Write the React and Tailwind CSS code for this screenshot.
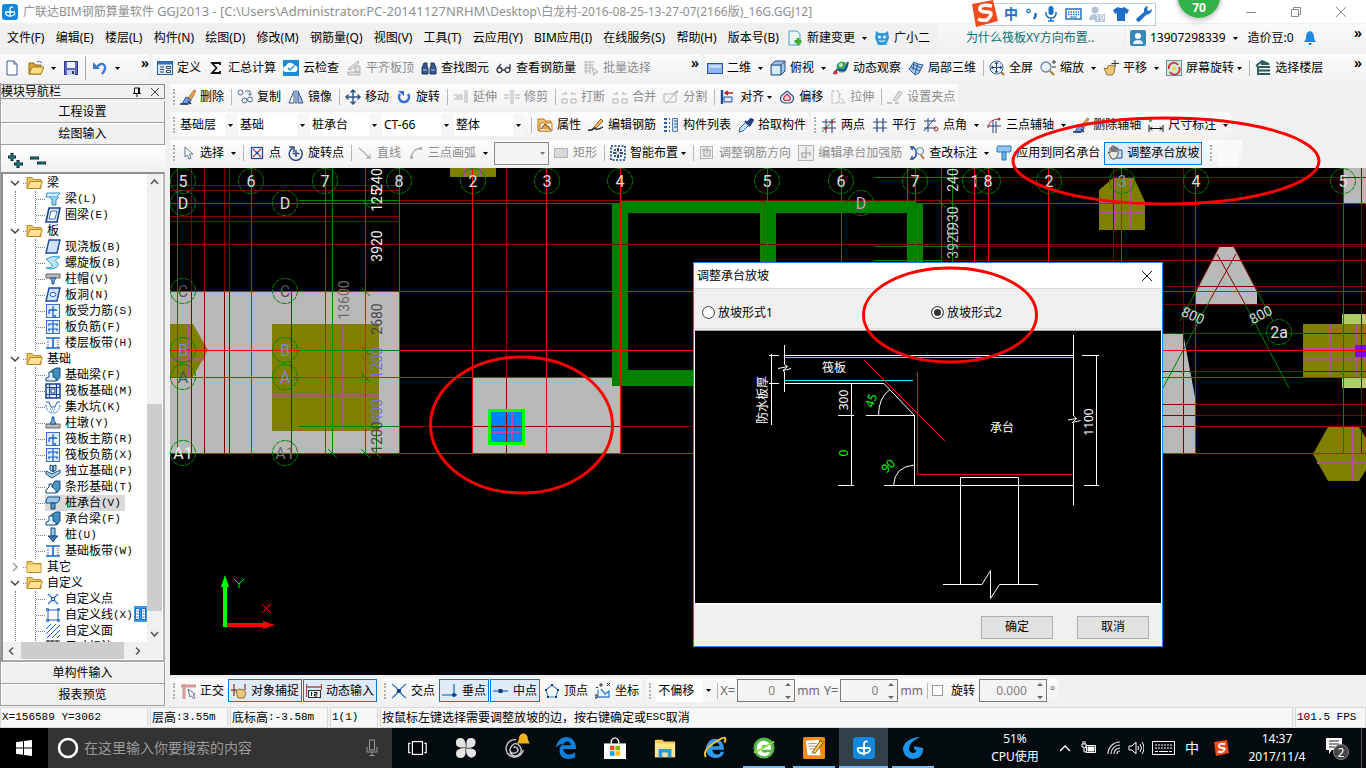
import React from "react";

const N = "#1a3c6e";
const G = "#b4b4b4";

const ICONS = {
  newfile: <><path d="M3 1h7l3 3v11H3z" fill="#fff" stroke="#3f5f8f" /><path d="M10 1v3h3" fill="#cfe0f5" stroke="#3f5f8f" /></>,
  open: <><path d="M1 3h5l1 2h6v9H1z" fill="#d9a93a" stroke="#8f6a1a" /><path d="M1 14l3-7h12l-3 7z" fill="#ffdf85" stroke="#a47a22" /><path d="M9 2q3-2 5 1" fill="none" stroke="#3c6fae" /></>,
  save: <><rect x="1.500" y="1.500" width="13" height="13" fill="#5b6cc0" stroke="#2d3a80" /><rect x="4" y="2" width="8" height="6" fill="#eef1fb" /><rect x="4" y="10" width="8" height="5" fill="#c9cfe8" /><rect x="9" y="11" width="2" height="3" fill="#2d3a80" /></>,
  undo: <><path d="M5 7q4-5 7-2t-2 9" fill="none" stroke="#3f78d0" strokeWidth="2.400" /><path d="M1 2v7h7z" fill="#3f78d0" /></>,
  define: <><rect x="0.500" y="1.500" width="15" height="13" fill="#dce9fb" stroke="#2b5fa8" /><path d="M1 3h14" stroke="#2b6fc8" strokeWidth="3" /><path d="M3 7h4M3 9.500h4M3 12h4" stroke="#34495e" /><path d="M9.500 6.500h4v2h-4zM9.500 10.500h4v2h-4z" fill="#fff" stroke="#34495e" /></>,
  sigma: <path d="M12 5V3H4l4.500 5L4 13h8v-2" fill="none" stroke="#111" strokeWidth="1.800" />,
  cloud: <><rect width="16" height="16" fill="#1c8ad6" /><path d="M3 12a3 3 0 0 1 0-6 4.500 4.500 0 0 1 8.500-.5A3.300 3.300 0 0 1 12 12z" fill="#fff" /><path d="M5 8l2 2 4-4" fill="none" stroke="#1c8ad6" strokeWidth="1.400" /></>,
  slabtop: <path d="M2 9L12 1l1 2-8 7zM2 12h12v3H2zM9 6h5v6H9z" fill="#ddd" stroke={G} />,
  binoc: <><path d="M3 3h3v3l1 2v6H1V8zM10 3h3l2 5v6H9V8l1-2z" fill="#35578c" stroke="#1d355c" /><path d="M7 8h2M2 10h4M10 10h4" stroke="#b8d0f0" /></>,
  glasses: <path d="M1 10a2.500 2.500 0 1 0 5 0 2.500 2.500 0 1 0-5 0M9 10a2.500 2.500 0 1 0 5 0 2.500 2.500 0 1 0-5 0M6 10h3M2 8l3-4M14 9V4" fill="none" stroke="#2b3a4a" strokeWidth="1.300" />,
  batch: <><path d="M1 2h10M1 5h10M1 8h8M1 11h7M3 1v13M7 1v13" stroke={G} /><path d="M9 7l6 5-3 .5-1 3z" fill="#eee" stroke={G} /></>,
  rect2d: <><rect x="0.500" y="3.500" width="15" height="10" fill="#8fb4f8" stroke="#2a4fae" /><path d="M2 5h12v3H2z" fill="#c4dafc" /></>,
  cube: <><path d="M1 5l4-4h10v10l-4 4H1z" fill="#9cc4e8" stroke="#284f7c" /><path d="M1 5h10v10M11 5l4-4" fill="none" stroke="#284f7c" /><path d="M2 6h8v8H2z" fill="#d9ebfa" /></>,
  orbit: <><circle cx="9" cy="7" r="5.500" fill="#3aa35a" /><circle cx="8" cy="5" r="2" fill="#bdf0c8" /><path d="M1 14q2-6 7-4t7-8" fill="none" stroke="#1c4fa0" strokeWidth="2" /><circle cx="2.500" cy="12.500" r="2" fill="#d03030" /></>,
  local3d: <><path d="M1 9l5-7 4 2 5 1-4 8-4 2z" fill="#a9c9ee" stroke="#2c5c94" /><path d="M6 2l-1 8M10 4L7 14M3 7l9 4M5 4l8 4" stroke="#2c5c94" fill="none" /></>,
  fit: <><circle cx="7.500" cy="7.500" r="6.500" fill="#e8f1fc" stroke="#44618c" /><path d="M7.500 2.500v10M2.500 7.500h10M6 4l1.500-2L9 4M6 11l1.500 2L9 11M4 6L2 7.500 4 9M11 6l2 1.500L11 9" fill="none" stroke="#234a86" /><path d="M12 12l3 3" stroke="#a06a2a" strokeWidth="2" /></>,
  zoom: <><circle cx="6" cy="7" r="5" fill="#eaf3fd" stroke="#6a87ac" strokeWidth="1.300" /><path d="M10 11l4 4" stroke="#b07830" strokeWidth="2.200" /><path d="M12 2h4M14 0v4M12 7h4" stroke="#333" /></>,
  pan: <><path d="M1 8l3 1 1-3 5-1 2 3-1 5-2 2H4z" fill="#ecc878" stroke="#94703a" /><path d="M12 0v7M8.500 3.500H16" stroke="#333" /></>,
  screenrot: <><rect x="0.500" y="0.500" width="15" height="15" fill="#cfe8d8" stroke="#6a92b0" /><path d="M3 9a5 5 0 0 1 9-4M13 7a5 5 0 0 1-9 5" fill="none" stroke="#d03030" strokeWidth="1.800" /><rect x="6" y="7" width="4" height="3" fill="#f2d250" /></>,
  floors: <path d="M1 6l6-5 7 3H6M4 7h11M3 10.500h12M3 14h12M3 6v9" fill="none" stroke="#2a5a5a" strokeWidth="1.800" />,
  brush: <><path d="M8 9L14 1l2 1-5 9z" fill="#e9a54c" stroke="#7a4a20" strokeWidth=".6" /><path d="M6 8l5 3-2 4H2z" fill="#7a9ed8" stroke="#2a4f94" /><path d="M0 15h8M8 12l3 3" stroke="#22396a" strokeWidth="1.500" /></>,
  copy: <><circle cx="3.500" cy="3.500" r="2.500" fill="none" stroke="#4a6a94" /><circle cx="7.500" cy="11.500" r="2.500" fill="none" stroke="#4a6a94" /><circle cx="13" cy="10.500" r="2.500" fill="none" stroke="#4a6a94" /><path d="M8 2h5v4M11 4.500l2 2 2-2" fill="none" stroke="#4a6a94" /></>,
  mirror: <><path d="M6 2v12H1z" fill="#fff" stroke="#2a5090" /><path d="M10 2v12h5z" fill="#a9c4ea" stroke="#2a5090" /><path d="M8 1v14" stroke="#2a5090" /></>,
  move: <path d="M8 1v14M1 8h14M5.500 3.500L8 1l2.500 2.500M5.500 12.500L8 15l2.500-2.500M3.500 5.500L1 8l2.500 2.500M12.500 5.500L15 8l-2.500 2.500" fill="none" stroke="#2f5384" strokeWidth="1.400" />,
  rotate: <><path d="M4 5a5 5 0 1 0 8 0" fill="none" stroke="#3a6fd0" strokeWidth="2.600" /><path d="M2 2h6v5z" fill="#3a6fd0" /></>,
  extend: <path d="M1 6h8v4H1M12 1v13M14 1v13M3 8h5" fill="none" stroke={G} />,
  trim: <path d="M0 6h5M0 9h5M7 1v14M9 1v14M11 6h5M11 9h5" fill="none" stroke={G} />,
  brk: <path d="M1 5h5M4 3l2 2M10 5h5M12 3l-2 2M1 10h5v4H1zM10 10h5v4h-5z" fill="none" stroke={G} />,
  split: <><path d="M1 5h12v8H1zM3 15L14 2" fill="none" stroke={G} /><path d="M10 4l5-3v3z" fill={G} /></>,
  align: <><path d="M2 1v14" stroke="#1d4c9c" strokeWidth="2.400" /><path d="M4 8h8v5H4z" fill="#dce9fb" stroke="#1d4c9c" /><path d="M5 4h8M8 2L5 4l3 2" fill="none" stroke="#b02020" strokeWidth="1.400" /></>,
  offset: <><path d="M8 2l6 5q2 6-4 7H6q-6-1-4-7z" fill="#e8eef8" stroke="#2a4f94" strokeWidth="1.200" /><path d="M8 5l3 3q1 3-1 3.500H6Q4 11 5 8z" fill="#f6c8c8" stroke="#c03838" strokeWidth="1.200" /></>,
  stretch: <path d="M2 2h7v12H2zM9 7l3-3M11 9l4 5H9" fill="none" stroke={G} strokeDasharray="3 1" />,
  grip: <><path d="M0 14h5M8 14h4" stroke={G} strokeWidth="1.500" /><path d="M6 11L12 2l3 2-6 8z" fill="#ddd" stroke={G} /></>,
  props: <><path d="M1 2h6l1 2h6v10H1z" fill="#f7c268" stroke="#b97a1c" /><path d="M3 6h12v8H3z" fill="#fff" stroke="#b97a1c" /><path d="M4 12l4-5 3 2 3 4" fill="#e0a040" stroke="#6a3a10" /></>,
  editbar: <><path d="M0 13q4 1 6-2 3 3 9-1" fill="none" stroke="#222" strokeWidth="1.500" /><path d="M6 10l7-8 2 2-7 7z" fill="#f0c060" stroke="#8a5a20" /></>,
  list: <><path d="M1 2h3M1 6h3M1 10h3M1 14h3M6 2h1M6 6h1M6 10h1M6 14h1" stroke="#2a5fae" strokeWidth="2" /><path d="M9.500 1.500h5v13h-5z" fill="#dbe8fa" stroke="#5a7aac" /><path d="M11 4h3M11 7h3M11 10h3" stroke="#2a4f94" /></>,
  pick: <><path d="M1 15l1-4 6-6 3 3-6 6z" fill="#cfe4fa" stroke="#2a5aa0" /><path d="M7 4l5 5M9 6l4-4 2 1-3 5" fill="#1f4f9f" stroke="#1f3f7f" strokeWidth="2" /></>,
  twopt: <><path d="M1 5h14M1 11h14M5 2v14M11 2v14" stroke="#2a3f84" fill="none" /><path d="M1 15L14 1" stroke="#2a8a3a" /><circle cx="5" cy="11" r="1.500" fill="#c02828" /><circle cx="11" cy="5" r="1.500" fill="#c02828" /></>,
  paral: <path d="M1 5h14M1 11h14M5 1v14M11 1v14" stroke="#2a3f84" strokeWidth="1.200" fill="none" />,
  ptang: <><path d="M1 4h12M1 11h12M5 1v14M1 14L12 1" stroke="#2a3f84" fill="none" /><circle cx="13" cy="12" r="2" fill="none" stroke="#c02828" /></>,
  threepx: <><path d="M1 9h14M7 3v13M10 4v12" stroke="#2a3f84" fill="none" /><path d="M2 11q1-9 11-9" fill="none" stroke="#c02828" /><circle cx="13" cy="2" r="1.500" fill="#c02828" /></>,
  dimen: <><path d="M1 8v7M15 8v7M2 11.500h12M4 9.500l-2 2 2 2M12 9.500l2 2-2 2" stroke="#111" fill="none" /><circle cx="2.500" cy="3.500" r="1.500" fill="#2faa3a" /></>,
  cursor: <path d="M5 2v10l2.500-2L9 14l2-1-1.500-4H13z" fill="#fff" stroke="#60758e" />,
  point: <><rect x="2.500" y="2.500" width="11" height="11" fill="#fff" stroke="#1d4c9c" strokeWidth="1.300" /><path d="M4 4l8 8M12 4l-8 8" stroke="#c02828" strokeWidth="1.200" /><circle cx="8" cy="8" r="1.400" fill="#1d4c9c" /></>,
  rotpt: <><path d="M5 3a6.500 6.500 0 1 0 7 1" fill="none" stroke="#2f4f80" strokeWidth="1.500" /><path d="M1 2h5v5M8 5v7M4.500 8.500h7" fill="none" stroke="#2f4f80" strokeWidth="1.500" /></>,
  line: <path d="M2 3l11 10M9 13h4V9" fill="none" stroke={G} strokeWidth="1.300" />,
  arc: <><path d="M3 13Q4 4 13 3" fill="none" stroke={G} strokeWidth="1.300" /><path d="M2 11h3v3H2zM11 2h3v3h-3z" fill={G} /></>,
  rect: <rect x="1.500" y="3.500" width="13" height="9" fill="#d8d8d8" stroke={G} />,
  smart: <><rect x="1" y="1" width="14" height="14" fill="#eaf2fc" stroke={N} strokeWidth="1.600" strokeDasharray="2 1.500" /><path d="M8 3v3.500M8 9.500V13M3 8h3.500M9.500 8H13" stroke="#111" strokeWidth="1.600" /><path d="M4 4h2v2H4zM10 4h2v2h-2zM4 10h2v2H4zM10 10h2v2h-2z" fill="#2f5fae" /></>,
  dirbar: <><rect x="1.500" y="1.500" width="12" height="12" fill="#eee" stroke={G} /><path d="M5 3v8h6V5H3M8 2v7" fill="none" stroke={G} strokeWidth="1.500" /></>,
  strength: <><rect x="0.500" y="0.500" width="15" height="15" fill="#eee" stroke={G} /><path d="M8 2v12M3 8h10M4 8v4h4M12 8v3" fill="none" stroke={G} strokeWidth="1.500" /></>,
  checkdim: <><path d="M1 2h3l3 3v6l-3 3H1M3 2v3M3 11v3" fill="none" stroke="#1d4c9c" strokeWidth="1.500" /><circle cx="11" cy="6" r="3.500" fill="#e5f1fd" stroke="#6a7f98" /><path d="M12 10l3 4" stroke="#b07830" strokeWidth="2" /></>,
  cap: <><path d="M2 1h13v5l-1 1H1V3z" fill="#8fc8f0" stroke="#2a78b8" /><path d="M6 7h4v8H6z" fill="#6ab0e4" stroke="#2a78b8" /></>,
  hand: <><path d="M8 5h7v8H8z" fill="#cfe0f5" stroke="#1d4c9c" /><path d="M1 7l2 1V3h2v4-6h2v6-5h2v5-4h2v7l-3 4H5z" fill="#e8e8e8" stroke="#555" /></>,
  ortho: <><path d="M1 3h15M4 1v15" stroke="#d49a9a" strokeWidth="3" fill="none" /><path d="M8 6l7 5-2 .8 2 3-1.500 1-2-3L10 14z" fill="#fff" stroke="#60758e" /></>,
  snap: <><path d="M0 7h6M3 1v12M14 1v6" stroke="#8a4a4a" strokeWidth="1.400" fill="none" /><path d="M5 8l3-2 5 1 2 3-2 5H7z" fill="#ecc878" stroke="#94703a" /></>,
  dyninput: <><path d="M0.500 1v13M15.500 1v6M0 4h15" stroke="#a05050" strokeWidth="1.300" /><rect x="2.500" y="7.500" width="12" height="7" fill="#eee" stroke="#333" /><path d="M5.500 9v4M8 9.500h3v1.700H8.500V13H11" stroke="#111" fill="none" /></>,
  cross: <><path d="M1 1q4 3 7 7t7 7M15 1q-4 3-7 7t-7 7" fill="none" stroke="#3a7fc8" strokeWidth="1.500" /><circle cx="8" cy="8" r="2" fill="#123a80" /></>,
  perp: <><path d="M0 12h15M12 1v11" stroke="#4a88cc" strokeWidth="1.600" /><circle cx="12" cy="12" r="2" fill="#123a80" /></>,
  mid: <><path d="M0 8h15" stroke="#4a88cc" strokeWidth="1.600" /><rect x="5.500" y="6" width="4" height="4" fill="#123a80" /></>,
  vertex: <><path d="M8 2l6 5-2 7H4L2 7z" fill="none" stroke="#4a88cc" strokeWidth="1.200" /><path d="M7 1h2v2H7zM13 6h2v2h-2zM11 13h2v2h-2zM3 13h2v2H3zM1 6h2v2H1z" fill="#123a80" /></>,
  coord: <><path d="M3 7v7h11V8l-4 3-4-5" fill="none" stroke="#3a7fc8" strokeWidth="1.300" /><path d="M1 4l1 1 1-1M5 1h2v2H5zM12 0l3 3M15 0l-3 3M0 12h2v3H0z" stroke="#234" fill="none" /></>,
  newchange: <><path d="M2 1h8l3 3v11H2z" fill="#eaf6fd" stroke="#4aa0c8" /><path d="M11 8v7M7.500 11.500h7" stroke="#3fae2a" strokeWidth="3" /></>,
  guang: <><path d="M2 1l3 2h6l3-2 1 7-3 7H4L1 8z" fill="#2a9be0" /><circle cx="5.500" cy="7" r="1.500" fill="#fff" /><circle cx="10.500" cy="7" r="1.500" fill="#fff" /><path d="M5 10.500q3 2 6 0" stroke="#fff" fill="none" /></>,
  user: <><rect width="16" height="16" rx="2" fill="#3b86b8" /><circle cx="8" cy="6" r="3" fill="#fff" /><path d="M3 14q0-4 5-4t5 4z" fill="#e4f0f8" /></>,
  bell: <><path d="M8 1q4 1 4 6 0 3 2 5H2q2-2 2-5 0-5 4-6z" fill="#1e88e5" /><path d="M6 13h4l-2 2.500z" fill="#1667b8" /></>,
  // component tree
  beam: <><path d="M2 2h13l-3 4H1z" fill="#d6effb" stroke="#2a8fc0" /><path d="M5 6l2 3v5h4V9l3-3" fill="#8fd0ee" stroke="#2a8fc0" /></>,
  ring: <><path d="M4 1h11l-3 14H1z" fill="#e6f0fc" stroke="#1c3f8c" strokeWidth="1.600" /><path d="M6 4h6l-2 8H4z" fill="#fff" stroke="#3a6fc0" /></>,
  slab: <path d="M4 1h11l-3 13H1z" fill="#cfe2fb" stroke="#1c4a9c" strokeWidth="1.400" />,
  spiral: <path d="M1 4q6-4 14-2-7 3-3 5 3 4-2 6t-9 0q7 0 6-3-3-4-6-6z" fill="#bfe6f8" stroke="#2a9ac8" />,
  colcap: <><path d="M1 3h14v4H1z" fill="#bbb" stroke="#666" /><path d="M5 7h6l-2 3v3H7v-3z" fill="#7fb0f0" stroke="#1c4a9c" /></>,
  hole: <><path d="M4 1h11l-3 13H1z" fill="#cfe2fb" stroke="#1c4a9c" strokeWidth="1.400" /><ellipse cx="8" cy="7.500" rx="3" ry="2" fill="#fff" stroke="#1c5fd0" /></>,
  bar1: <><rect x="1.500" y="1.500" width="13" height="13" fill="#e3eefd" stroke="#3a6fc0" /><path d="M8 3v10h3M4 7h8M4 7v4" fill="none" stroke="#1c5fd0" strokeWidth="1.300" /></>,
  bar2: <><rect x="1.500" y="1.500" width="13" height="13" fill="#e3eefd" stroke="#3a6fc0" /><path d="M8 2v12M3 5h10M3 10h10M4 5v2M12 5v2M4 10v2M12 10v2" fill="none" stroke="#1c5fd0" strokeWidth="1.200" /></>,
  strip: <><path d="M1 3h14M1 13h14M8 3v10" fill="none" stroke="#1c5fd0" strokeWidth="1.600" /><path d="M3 5v7M13 5v7" stroke="#345" strokeDasharray="1 1" /></>,
  fbeam: <><path d="M6 10V4l5-3h4v9l-3 4z" fill="#3f8fc0" stroke="#164a7c" /><path d="M1 14v-3l3-1V5h4v5l3 1v3z" fill="#e4f3fb" stroke="#164a7c" /></>,
  raft: <><rect x="1" y="1" width="14" height="14" fill="#e3eefd" stroke="#163f8c" strokeWidth="1.500" /><path d="M4.500 1v14M11.500 1v14M1 4.500h14M1 11.500h14" stroke="#163f8c" /><rect x="6" y="6" width="4" height="4" fill="#fff" stroke="#163f8c" /></>,
  sump: <><path d="M1 3h3l2 5h4l2-5h3" fill="none" stroke="#1c5fd0" /><path d="M1 6q1 8 7 8t7-8" fill="none" stroke="#1c5fd0" strokeDasharray="2 1" /><path d="M5 10h6M6 12h4" stroke="#1c5fd0" strokeDasharray="1 1" /></>,
  pier: <><path d="M1 9h14v4H1z" fill="#bbb" stroke="#666" /><path d="M7 2h2v3l2 4H5l2-4z" fill="#7fb0f0" stroke="#1c4a9c" /></>,
  isolated: <path d="M1 8l6 3 8-4v3l-8 5-6-4zM5 2l3 1v6L5 7zM8 3l3-1v5L8 9z" fill="#a9d2ea" stroke="#164a7c" />,
  stripf: <><path d="M6 8l4-6h5v8l-3 4z" fill="#4a98c4" stroke="#164a7c" /><path d="M1 14v-3l3-3V5h3v3l4 3v3z" fill="#fff" stroke="#164a7c" /></>,
  pilecap: <><path d="M1 5l2-3h12l-1 4-2 2H1z" fill="#9cc8e8" stroke="#164a7c" /><path d="M6 8h4v6H6z" fill="#4a98c4" stroke="#164a7c" /></>,
  pile: <><path d="M6 1h4v8H6z" fill="#9cc8e8" stroke="#164a7c" /><path d="M3 9h10l-3 3-2 3-2-3z" fill="#3f7fb0" stroke="#164a7c" /></>,
  cpoint: <><path d="M3 3l10 10M13 3L3 13" stroke="#2a70c0" strokeWidth="1.200" /><circle cx="8" cy="8" r="1.600" fill="#fff" stroke="#123a80" /></>,
  cline: <><rect x="3" y="3" width="10" height="10" fill="#fff" stroke="#1c5fd0" /><path d="M1.500 1.500h2v2h-2zM12.500 1.500h2v2h-2zM1.500 12.500h2v2h-2zM12.500 12.500h2v2h-2z" fill="#7fb0f0" stroke="#1c4a9c" strokeWidth=".7" /></>,
  cface: <path d="M1 6l5-5M1 11L11 1M2 15L15 2M7 15l8-8M12 15l3-3" stroke="#1c5fd0" />,
  cmore: <path d="M1 2h14M3 1v4M7 1v4M12 1v4" stroke="#222" />,
};

function Icon({ name }) {
  return <svg viewBox="0 0 16 16" className="h-4 w-4 shrink-0" fill="none" aria-hidden="true">{ICONS[name]}</svg>;
}

function Caret() {
  return <svg viewBox="0 0 5 3" className="h-[3px] w-[5px] shrink-0" aria-hidden="true"><path d="M0 0h5L2.500 3z" fill="#000" /></svg>;
}

function Sep() {
  return <span className="-mr-0.5 h-4 w-px shrink-0 bg-[#b8b8b8]" />;
}

function Grip() {
  return <span className="-mr-0.5 h-4 shrink-0 border-l-2 border-dotted border-[#b0b0b0]" />;
}

function More() {
  return <button aria-label="更多" className="self-start pt-0.5 text-sm font-semibold leading-none text-black">»</button>;
}

function Tool({ icon, label, off, caret, tight, active }) {
  return (
    <button
      disabled={off}
      className={
        "flex h-[23px] shrink-0 items-center whitespace-nowrap " +
        (active ? "-mx-[3px] border border-[#0078d7] bg-[#dfebf7] px-0.5 " : "") +
        (off ? "text-[#8c8c8c]" : "text-black")
      }
    >
      <Icon name={icon} />
      <span className="ml-1">{label}</span>
      {caret && <span className="ml-[7px] flex"><Caret /></span>}
      {tight && <span className="ml-[3px] flex"><Caret /></span>}
    </button>
  );
}

function Combo({ label, value, short }) {
  return (
    <div className={"relative h-[22px] shrink-0 " + (short ? "w-[58px]" : "w-[70px]")}>
      <select aria-label={label} className="h-full w-full appearance-none bg-white pl-0.5 pr-3 text-xs outline-none">
        <option>{value}</option>
      </select>
      <span className="pointer-events-none absolute inset-y-0 right-0 flex w-[11px] items-center justify-center bg-[#f6f6f6]"><Caret /></span>
    </div>
  );
}

function Group({ children, className = "" }) {
  return <div className={"flex h-[26px] items-center gap-[7px] rounded-sm bg-linear-to-b from-[#fcfcfc] to-[#f1f1f1] px-[3px] " + className}>{children}</div>;
}

function Sim({ text }) {
  return text.split(/([\x20-\x7e]+)/).filter(Boolean).map((part, i) =>
    /^[\x20-\x7e]+$/.test(part)
      ? <span key={i} className="whitespace-pre font-['Liberation_Mono',monospace] text-[11px]">{part}</span>
      : <span key={i}>{part}</span>
  );
}

function TitleBar() {
  return (
    <header className="flex h-[23px] shrink-0 items-center bg-white pl-0.5 pr-5">
      <svg viewBox="0 0 16 16" className="h-4 w-4" aria-hidden="true">
        <rect width="16" height="16" rx="3" fill="#1287e0" />
        <path d="M8 13V5a2 2 0 0 1 3-1.500M3 8h10M3.500 8q0 4 4.500 4t5-3" fill="none" stroke="#fff" strokeWidth="1.300" />
      </svg>
      <h1 className="ml-[5px] whitespace-nowrap text-[#8f8f8f]">
        广联达BIM钢筋算量软件 <span className="text-[13px]">GGJ2013 - [C:\Users\Administrator.PC-20141127NRHM\</span>Desktop\白龙村-2016-08-25-13-27-07(2166版)_16G.GGJ12]
      </h1>
      <div className="ml-auto flex items-center gap-[35px] text-[#8a8a8a]">
        <button aria-label="最小化"><svg viewBox="0 0 10 10" className="h-2.5 w-2.5"><path d="M0 5.500h10" stroke="currentColor" /></svg></button>
        <button aria-label="还原"><svg viewBox="0 0 10 10" className="h-2.5 w-2.5"><path d="M.5 2.500h7v7h-7zM2.500 2.500v-2h7v7h-2" fill="none" stroke="currentColor" /></svg></button>
        <button aria-label="关闭"><svg viewBox="0 0 10 10" className="h-2.5 w-2.5"><path d="M0 0l10 10M10 0L0 10" stroke="currentColor" /></svg></button>
      </div>
    </header>
  );
}

const MENUS = ["文件(F)", "编辑(E)", "楼层(L)", "构件(N)", "绘图(D)", "修改(M)", "钢筋量(Q)", "视图(V)", "工具(T)", "云应用(Y)", "BIM应用(I)", "在线服务(S)", "帮助(H)", "版本号(B)"];

function MenuBar() {
  return (
    <nav className="flex h-[30px] shrink-0 items-center whitespace-nowrap">
      <div className="flex w-[787px] shrink-0 justify-between pl-[7px] pr-2">
        {MENUS.map((m) => <button key={m}>{m}</button>)}
      </div>
      <div className="flex w-[150px] shrink-0 items-center gap-[7px]">
        <Tool icon="newchange" label="新建变更" caret />
        <Tool icon="guang" label="广小二" />
      </div>
      <div className="flex h-7 w-[187px] shrink-0 items-center bg-linear-to-b from-[#f8f8f8] to-[#f1f1f1] pl-[29px]">
        <a href="#tip" className="text-[#0b6e6e]">为什么筏板XY方向布置..</a>
      </div>
      <div className="ml-0.5 flex h-7 grow items-center bg-linear-to-b from-[#fafafa] to-[#f1f1f1] pl-1 pr-0.5">
        <Tool icon="user" label="13907298339" caret />
        <span className="ml-2.5">造价豆:0</span>
        <button aria-label="消息" className="ml-2"><Icon name="bell" /></button>
        <div className="ml-auto self-start pr-0.5"><More /></div>
      </div>
    </nav>
  );
}

function MainToolbar() {
  return (
    <div className="flex h-[30px] shrink-0 items-center gap-1">
      <div className="flex h-7 w-[149px] shrink-0 items-center bg-linear-to-b from-[#fcfcfc] to-[#f1f1f1] pl-1">
        <button aria-label="新建"><Icon name="newfile" /></button>
        <button aria-label="打开" className="ml-2 flex items-center gap-[7px]"><Icon name="open" /><Caret /></button>
        <button aria-label="保存" className="ml-[7px]"><Icon name="save" /></button>
        <span className="ml-1.5 h-6 w-px bg-[#a8a8a8]" />
        <button aria-label="撤销" className="ml-1.5 flex items-center gap-[7px]"><Icon name="undo" /><Caret /></button>
        <div className="ml-auto self-start"><More /></div>
      </div>
      <div className="flex h-7 w-[548px] shrink-0 items-center gap-[7px] bg-linear-to-b from-[#fcfcfc] to-[#f1f1f1] pl-1">
        <Tool icon="define" label="定义" />
        <Tool icon="sigma" label="汇总计算" />
        <Tool icon="cloud" label="云检查" />
        <Tool icon="slabtop" label="平齐板顶" off />
        <Tool icon="binoc" label="查找图元" />
        <Tool icon="glasses" label="查看钢筋量" />
        <Tool icon="batch" label="批量选择" off />
        <div className="ml-auto self-start pr-0.5"><More /></div>
      </div>
      <div className="flex h-7 grow items-center gap-[7px] bg-linear-to-b from-[#fcfcfc] to-[#f1f1f1] pl-0.5">
        <Tool icon="rect2d" label="二维" caret />
        <Tool icon="cube" label="俯视" caret />
        <Tool icon="orbit" label="动态观察" />
        <Tool icon="local3d" label="局部三维" />
        <Sep />
        <Tool icon="fit" label="全屏" />
        <Tool icon="zoom" label="缩放" caret />
        <Tool icon="pan" label="平移" caret />
        <Tool icon="screenrot" label="屏幕旋转" tight />
        <Sep />
        <Tool icon="floors" label="选择楼层" />
        <div className="ml-auto self-start pr-1"><More /></div>
      </div>
    </div>
  );
}

const TREE = [
  { t: "梁", open: true, items: [["beam", "梁(L)"], ["ring", "圈梁(E)"]] },
  { t: "板", open: true, items: [["slab", "现浇板(B)"], ["spiral", "螺旋板(B)"], ["colcap", "柱帽(V)"], ["hole", "板洞(N)"], ["bar1", "板受力筋(S)"], ["bar2", "板负筋(F)"], ["strip", "楼层板带(H)"]] },
  { t: "基础", open: true, items: [["fbeam", "基础梁(F)"], ["raft", "筏板基础(M)"], ["sump", "集水坑(K)"], ["pier", "柱墩(Y)"], ["bar1", "筏板主筋(R)"], ["bar2", "筏板负筋(X)"], ["isolated", "独立基础(P)"], ["stripf", "条形基础(T)"], ["pilecap", "桩承台(V)"], ["fbeam", "承台梁(F)"], ["pile", "桩(U)"], ["strip", "基础板带(W)"]] },
  { t: "其它", open: false, items: [] },
  { t: "自定义", open: true, items: [["cpoint", "自定义点"], ["cline", "自定义线(X)"], ["cface", "自定义面"], ["cmore", "尺寸标注(W)"]] },
];

function Chevron({ open }) {
  return (
    <svg viewBox="0 0 10 10" className="h-2.5 w-2.5 shrink-0" fill="none" aria-hidden="true">
      {open ? <path d="M1 3l4 4 4-4" stroke="#404040" strokeWidth="1.500" /> : <path d="M3 1l4 4-4 4" stroke="#a0a0a0" strokeWidth="1.500" />}
    </svg>
  );
}

function Folder({ open }) {
  return (
    <svg viewBox="0 0 17 16" className="h-4 w-[17px] shrink-0" aria-hidden="true">
      <path d="M1 2.500h5l1.500 2H15v9H1z" fill="#f0c45c" stroke="#b98a2c" />
      {open ? <path d="M1 13.500l3-7h12.500l-3 7z" fill="#ffe397" stroke="#b98a2c" /> : <path d="M1.500 6h13v7h-13z" fill="#ffe08a" />}
    </svg>
  );
}

function Tree() {
  return (
    <ul className="whitespace-nowrap pt-px">
      {TREE.map((g) => (
        <li key={g.t}>
          <div className="flex h-4 items-center pl-[7px]">
            <Chevron open={g.open} />
            <span className="ml-[3px] w-[3px] border-t border-dotted border-[#808080]" />
            <Folder open={g.open} />
            <span className="ml-1"><Sim text={g.t} /></span>
          </div>
          {g.items.length > 0 && (
            <ul className="ml-3 border-l border-dotted border-[#808080]">
              {g.items.map(([icon, label]) => (
                <li key={label} className="ml-[19px] flex h-4 items-center border-l border-dotted border-[#808080]">
                  <span className="w-[9px] border-t border-dotted border-[#808080]" />
                  <a href="#item" className={"flex h-4 items-center " + (label === "桩承台(V)" ? "bg-[#d9d9d9] pr-1" : "")}>
                    <Icon name={icon} />
                    <span className="ml-1 flex items-center"><Sim text={label} /></span>
                  </a>
                </li>
              ))}
            </ul>
          )}
        </li>
      ))}
    </ul>
  );
}

function PanelButton({ children }) {
  return <button className="h-[22px] w-full shrink-0 border-b border-r border-[#a0a0a0] bg-[#f0f0f0] shadow-[inset_1px_1px_0_#fff]">{children}</button>;
}

function NavPanel() {
  return (
    <aside className="flex w-[165px] shrink-0 flex-col border-l border-[#a0a0a0] pt-px">
      <div className="flex h-[15px] shrink-0 items-center border border-l-0 border-[#8a8a8a] leading-none">
        <h2>模块导航栏</h2>
        <button aria-label="固定" className="ml-auto"><svg viewBox="0 0 10 10" className="h-2.5 w-2.5" fill="none" stroke="#111"><path d="M2.500 6V1h5v5M1 6.500h8M5 6.500V10M6.500 1v5" /></svg></button>
        <button aria-label="关闭面板" className="ml-2 mr-1"><svg viewBox="0 0 10 10" className="h-2.5 w-2.5" stroke="#444"><path d="M1 1l8 8M9 1L1 9" /></svg></button>
      </div>
      <div className="mt-0.5 flex flex-col"><PanelButton>工程设置</PanelButton><PanelButton>绘图输入</PanelButton></div>
      <div className="flex h-[27px] shrink-0 items-center gap-1.5 bg-linear-to-b from-white to-[#f1f1f1] pl-1.5 pt-0.5">
        <button aria-label="展开全部"><svg viewBox="0 0 16 16" className="h-4 w-4"><path d="M5 1v8M1 5h8M11 8v8M7 12h9" stroke="#123" strokeWidth="3" /><path d="M5 2v6M2 5h6M11 9v6M8 12h7" stroke="#18a08c" /></svg></button>
        <button aria-label="折叠全部"><svg viewBox="0 0 17 16" className="h-4 w-[17px]"><path d="M1 6h9M8 11h9" stroke="#123" strokeWidth="3" /><path d="M2 6h7M9 11h7" stroke="#18a08c" /></svg></button>
      </div>
      <div className="flex min-h-0 grow flex-col border-2 border-[#8c8f94] border-b-[#a8a8a8] border-r-[#b4b4b4] bg-white pb-px pr-px">
        <div className="flex min-h-0 grow">
          <div className="relative min-w-0 grow overflow-hidden">
            <Tree />
            <svg viewBox="0 0 13 16" className="absolute right-0 top-[432px] h-4 w-[13px]" aria-hidden="true">
              <rect width="13" height="16" fill="#3a9ae8" /><path d="M1.500 2.500h4v11h-4zM7.500 2.500h4v11h-4z" fill="#fff" stroke="#1c6fc0" /><path d="M2.500 5h2M2.500 8h2M2.500 11h2M8.500 5h2M8.500 8h2M8.500 11h2" stroke="#1c6fc0" />
            </svg>
          </div>
          <div className="flex w-[15px] shrink-0 flex-col items-center bg-[#f0f0f0]">
            <svg viewBox="0 0 15 16" className="h-4 w-[15px]" fill="none"><path d="M4 10l3.500-4L11 10" stroke="#555" strokeWidth="1.500" /></svg>
            <div className="grow-[214]" />
            <div className="w-full grow-[206] bg-[#cdcdcd]" />
            <div className="grow-[15]" />
            <svg viewBox="0 0 15 16" className="h-4 w-[15px]" fill="none"><path d="M4 6l3.500 4L11 6" stroke="#555" strokeWidth="1.500" /></svg>
          </div>
        </div>
        <div className="flex h-[17px] shrink-0 items-center bg-[#f0f0f0] pr-[15px]">
          <svg viewBox="0 0 18 16" className="h-4 w-[18px]" fill="none"><path d="M10 4.500L6.500 8l3.500 3.500" stroke="#555" strokeWidth="1.500" /></svg>
          <div className="h-full grow bg-[#cdcdcd]" />
          <svg viewBox="0 0 23 16" className="h-4 w-[23px]" fill="none"><path d="M12 4.500L15.500 8 12 11.500" stroke="#555" strokeWidth="1.500" /></svg>
        </div>
      </div>
      <PanelButton>单构件输入</PanelButton>
      <PanelButton>报表预览</PanelButton>
    </aside>
  );
}

function DrawToolbars() {
  return (
    <div className="flex shrink-0 flex-col pb-px">
      <div className="flex h-7 items-center">
        <Group>
          <Grip />
          <Tool icon="brush" label="删除" />
          <Sep />
          <Tool icon="copy" label="复制" />
          <Tool icon="mirror" label="镜像" />
          <Sep />
          <Tool icon="move" label="移动" />
          <Tool icon="rotate" label="旋转" />
          <Sep />
          <Tool icon="extend" label="延伸" off />
          <Tool icon="trim" label="修剪" off />
          <Sep />
          <Tool icon="brk" label="打断" off />
          <Tool icon="brk" label="合并" off />
          <Tool icon="split" label="分割" off />
          <Sep />
          <Tool icon="align" label="对齐" tight />
          <Tool icon="offset" label="偏移" />
          <Tool icon="stretch" label="拉伸" off />
          <Sep />
          <Tool icon="grip" label="设置夹点" off />
        </Group>
      </div>
      <div className="flex h-7 items-center gap-0.5">
        <Group>
          <Grip />
          <div className="-ml-0.5 flex gap-0.5">
            <Combo label="楼层" value="基础层" short />
            <Combo label="构件类型" value="基础" />
            <Combo label="构件" value="桩承台" />
            <Combo label="构件名称" value="CT-66" />
            <Combo label="范围" value="整体" />
          </div>
          <Sep />
          <Tool icon="props" label="属性" />
          <Tool icon="editbar" label="编辑钢筋" />
          <Tool icon="list" label="构件列表" />
          <Tool icon="pick" label="拾取构件" />
        </Group>
        <Group>
          <Grip />
          <Tool icon="twopt" label="两点" />
          <Tool icon="paral" label="平行" />
          <Tool icon="ptang" label="点角" caret />
          <Tool icon="threepx" label="三点辅轴" caret />
          <Tool icon="brush" label="删除辅轴" />
          <Tool icon="dimen" label="尺寸标注" caret />
        </Group>
      </div>
      <div className="flex h-7 items-center">
        <Group>
          <Grip />
          <Tool icon="cursor" label="选择" caret />
          <Sep />
          <Tool icon="point" label="点" />
          <Tool icon="rotpt" label="旋转点" />
          <Sep />
          <Tool icon="line" label="直线" off />
          <Tool icon="arc" label="三点画弧" off caret />
          <div className="relative -ml-px -mr-[3px] h-[23px] w-[55px]">
            <select aria-label="画弧方式" disabled className="h-full w-full appearance-none border border-[#8a8a8a] bg-[#f4f4f4]"><option value=""></option></select>
            <span className="pointer-events-none absolute inset-y-0 right-1 flex items-center opacity-50"><Caret /></span>
          </div>
          <Tool icon="rect" label="矩形" off />
          <Sep />
          <Tool icon="smart" label="智能布置" tight />
          <Sep />
          <Tool icon="dirbar" label="调整钢筋方向" off />
          <Tool icon="strength" label="编辑承台加强筋" off />
          <Tool icon="checkdim" label="查改标注" caret />
          <Tool icon="cap" label="应用到同名承台" />
          <Tool icon="hand" label="调整承台放坡" active />
          <span className="ml-1 flex"><Grip /></span>
          <span className="h-[26px] w-[22px] bg-[#fafafa]" />
        </Group>
      </div>
    </div>
  );
}

const RED = "#ff0000";
const DARK = "#800000";
const GREEN = "#008000";
const PINK = "#b0509c";

const V = (list, y1, y2) => list.map((x) => `M${x} ${y1}V${y2}`).join("");
const H = (list, x1, x2) => list.map((y) => `M${x1} ${y}H${x2}`).join("");

const BUBBLES = [
  ["5", 183, 181], ["6", 251, 181], ["7", 325, 181], ["8", 399, 181],
  ["D", 183, 203], ["D", 285, 203], ["C", 183, 291, "#505050"], ["C", 285, 291, "#505050"],
  ["B", 183, 350, "#8484d0"], ["B", 285, 350, "#8484d0"], ["A", 183, 377, "#505060"], ["A", 285, 377, "#8484d0"],
  ["A1", 183, 453, "#f0f0f0"], ["A1", 285, 453, "#707070"],
  ["2", 473, 181], ["3", 547, 181], ["4", 620, 181], ["5", 767, 181], ["6", 841, 181], ["7", 915, 181],
  ["D", 861, 203, "#d0a0d0"], ["1", 975, 181], ["8", 988, 181], ["2", 1049, 181], ["3", 1122, 181, "#8c8ca8"],
  ["4", 1196, 181], ["5", 1343, 181], ["2a", 1279, 332],
];

const DIMS = [
  ["240", 382, 180, -90, "#f0f0f0"], ["125", 382, 200, -90, "#f0f0f0"], ["3920", 382, 246, -90, "#f0f0f0"],
  ["13600", 349, 300, -90, "#6c6c6c"], ["2680", 382, 319, -90, "#484848"], ["1200", 382, 363, -90, "#7474d0"],
  ["400", 382, 411, -90, "#7474d0"], ["1200", 382, 437, -90, "#484848"],
  ["240", 958, 180, -90, "#d8d8d8"], ["1930", 958, 222, -90, "#d8d8d8"], ["3920", 958, 243, -90, "#c8b8c8"],
  ["800", 1191, 320, 24, "#d8d8d8"], ["800", 1263, 319, -28, "#d8d8d8"],
];

function Drawing() {
  return (
    <svg viewBox="170 168 1196 507" preserveAspectRatio="xMidYMid slice" className="absolute inset-0 h-full w-full" fill="none">
      <rect x="170" y="168" width="1196" height="507" fill="#000" />
      <g fill="#b8b8b8">
        <rect x="170" y="291" width="229" height="162" />
        <rect x="473" y="377" width="148" height="76" />
        <rect x="1343" y="168" width="23" height="35" />
        <path d="M1162 333h21l12 64v56h-33z" />
        <path d="M1219 247h15l23 44v13h-61v-13z" />
      </g>
      <path d="M612 203h311v10H628v157h70v16h-86zM620 201h295v3H620zM760 203h16v60h-16zM907 203h16v60h-16z" fill={GREEN} />
      <rect x="1342" y="314" width="24" height="74" fill="#b0cc66" />
      <path d="M272 324h107v107H272zM170 324h23l15 26-15 27h-23zM450 168h46v9h-46zM1099 190l14-12h21l11 24v28h-46zM1303 324h63v53h-63zM1313 454l15-27h31l7 11v32l-7 11h-31z" fill="#808000" />
      <path d="M343 324v107M272 395.500h107M188 324v53M170 359.500h34M465 168v9M480 168v9M1114 178v52M1130 178v52M1099 202h46M1099 212h46M1330 324v53M1357 324v53M1303 349h63M1303 359.500h63M1353 427v54M1317 463h49" stroke={PINK} strokeWidth="2" />
      <rect x="1355" y="345" width="11" height="12" fill="#8000ff" />
      <g shapeRendering="crispEdges">
        <path d={V([191.5, 204.5, 224.5, 229.5], 168, 453) + "M291.500 291V453M506.500 168V453" + V([1113.5, 1183.5, 1361.5], 168, 453) + H([185.5, 190.5, 216.5, 221.5], 170, 399) + H([200.5], 399, 988) + H([244.5], 170, 1366) + H([426.5], 399, 1366) + H([177.5, 246.5, 260.5], 941, 1366) + H([286.5, 304.5, 333.5, 371.5, 404.5, 415.5], 1162, 1366)} stroke={DARK} />
        <path d={V([177.5, 251.5, 325.5, 399.5, 472.5, 546.5, 620.5, 767.5, 841.5, 915.5, 974.5, 988.5, 1048.5, 1121.5, 1195.5, 1343.5], 168, 453) + H([203.5, 291.5, 350.5, 377.5, 453.5], 170, 1366)} stroke={RED} />
        <path d={V([332.5, 365.5], 168, 453) + H([200.5, 203.5, 291.5, 350.5, 377.5, 426.5, 453.5], 299, 399) + "M376.500 426V453" + V([907.5, 941.5, 952.5], 168, 262) + "M874 177.500H988M874 246.500H974M874 260.500H941"} stroke={GREEN} />
      </g>
      <path d="M361 199l9 9M372 199l9 9M361 287l9 9M361 346l9 9M361 373l9 9M361 449l9 9M328 449l9 9M372 449l9 9M937 199l9 9M948 199l9 9M1257 291l16 30M1245 304l44 84M1210 300l-47 88M1196 291l-16 30M1184 306l20 10M1250 326l20-12" stroke={GREEN} />
      <path d="M1217 254l28 50M1236 254l-26 46M1219 247l-23 44M1234 247l23 44" stroke={DARK} />
      <g className="font-[Roboto,sans-serif] text-base" textAnchor="middle">
        {BUBBLES.map(([t, x, y, c], i) => (
          <g key={i}>
            <circle cx={x} cy={y} r="12.500" stroke={GREEN} strokeDasharray="5 1" />
            <text x={x} y={y + 6} fill={c || "#e0e0e0"}>{t}</text>
          </g>
        ))}
      </g>
      <g className="font-[Roboto,sans-serif] text-sm" textAnchor="middle">
        {DIMS.map(([t, x, y, a, c], i) => <text key={i} transform={`translate(${x} ${y}) rotate(${a})`} fill={c}>{t}</text>)}
      </g>
      <rect x="489.500" y="410.500" width="34" height="33" fill="#0080ff" stroke="#00ff00" strokeWidth="3" />
      <path d="M512 412v30M491 432h31" stroke={PINK} strokeWidth="2" />
      <path d="M506.500 412v30M491 426.500h31" stroke={DARK} />
      <path d="M225 627V583" stroke="#00ff00" strokeWidth="4" /><path d="M225 575l4 12h-8z" fill="#00ff00" />
      <path d="M227 625h38" stroke={RED} strokeWidth="4" /><path d="M275 625l-12 4v-8z" fill={RED} />
      <path d="M234 579l5 5 5-5M239 584v4" stroke="#00ff00" /><path d="M262 604l9 9M271 604l-9 9" stroke={RED} />
    </svg>
  );
}

function SlopeDiagram() {
  return (
    <svg viewBox="695 331 466 272" className="h-full w-full bg-black" fill="none">
      <path d="M785 357.500h288M785 380.500h128" stroke="#00ffff" />
      <path d="M864 360l81 81M917.500 372v102.500H1073" stroke="#ff0000" />
      <g stroke="#fff">
        <path d="M784.500 345v19.500l3 2-4.500 4 1.500 1.500v20M778 368.500l9.500-2M783 370.500l8-2" />
        <path d="M785 355.500h288M785 383.500h99l30.500 32h-48.500M914.500 415v70.500M884 485.500h189M771.500 354v71M769 355.500h10M769 383.500h10" />
        <path d="M878.500 415.500q0-18 11.500-26M893.500 485.500q1-19 21-20.500M851.500 384v101.500M838 415.500h16M838 485.500h16" />
        <path d="M1073.500 335v81l3 2.500-4 4 1 1v82M1068 420l8.500-1.500M1072.500 422.500l8-2M1096.500 355.500v130M1082 355.500h17M1084 485.500h15" />
        <path d="M960.500 584V477.500h58V584M943 584.500h39l8.500-14v28l9-14h38.500" />
      </g>
      <g className="text-xs" fill="#fff" textAnchor="middle">
        <text x="834" y="372">筏板</text>
        <text x="1002" y="432">承台</text>
        <text transform="translate(767 400) rotate(-90)">防水板厚</text>
        <text transform="translate(848 400) rotate(-90)">300</text>
        <text transform="translate(1093 422) rotate(-90)">1100</text>
        <text transform="translate(848 453) rotate(-90)" fill="#00ff00">0</text>
        <text transform="translate(875 402) rotate(-70)" fill="#00ff00">45</text>
        <text transform="translate(891 469) rotate(-45)" fill="#00ff00">90</text>
      </g>
    </svg>
  );
}

function Radio({ id, label, checked }) {
  return (
    <label htmlFor={id} className="flex items-center gap-[3px]">
      <input id={id} type="radio" name="slope" defaultChecked={checked} className="h-[13px] w-[13px] appearance-none rounded-full border border-[#444] bg-white checked:bg-[#333] checked:shadow-[inset_0_0_0_2px_#fff]" />
      {label}
    </label>
  );
}

function SlopeDialog() {
  return (
    <section role="dialog" aria-label="调整承台放坡" className="absolute left-[523px] top-[94px] flex h-[385px] w-[470px] flex-col border border-[#2a86e0] bg-[#f0f0f0]">
      <div className="flex h-[25px] shrink-0 items-center bg-white pl-[3px] pr-2.5">
        <h2>调整承台放坡</h2>
        <button aria-label="关闭对话框" className="ml-auto"><svg viewBox="0 0 10 10" className="h-2.5 w-2.5" stroke="#111"><path d="M0 0l10 10M10 0L0 10" /></svg></button>
      </div>
      <div className="flex h-[41px] shrink-0 items-center border-y border-[#dcdcdc] pl-2 pt-2">
        <div className="w-[229px]"><Radio id="slope1" label="放坡形式1" /></div>
        <Radio id="slope2" label="放坡形式2" checked />
      </div>
      <div className="mt-px min-h-0 grow border border-[#fff] border-t-[#a0a0a0] bg-black"><SlopeDiagram /></div>
      <div className="flex h-[42px] shrink-0 items-center justify-end gap-6 border-t border-white pb-px pr-[13px] pt-1">
        <button className="h-[23px] w-[72px] border border-[#adadad] bg-[#e1e1e1]">确定</button>
        <button className="h-[23px] w-[72px] border border-[#adadad] bg-[#e1e1e1]">取消</button>
      </div>
    </section>
  );
}

function Spin({ id, value, wide, label }) {
  return (
    <div className={"relative h-[23px] " + (wide ? "w-[68px]" : "w-[58px]")}>
      <input id={id} aria-label={label} defaultValue={value} className="h-full w-full border border-[#7a7a7a] bg-[#f4f4f4] pr-[19px] text-right text-[#808080]" />
      <svg viewBox="0 0 6 16" className="absolute right-1 top-1 h-4 w-1.5" fill="#666" aria-hidden="true"><path d="M0 3h6L3 0zM0 13h6l-3 3z" /></svg>
    </div>
  );
}

function SnapToolbar() {
  return (
    <div className="flex h-[31px] shrink-0 items-center gap-1">
      <Group>
        <Grip />
        <Tool icon="ortho" label="正交" />
        <Tool icon="snap" label="对象捕捉" active />
        <Tool icon="dyninput" label="动态输入" active />
      </Group>
      <Group>
        <Grip />
        <Tool icon="cross" label="交点" />
        <Tool icon="perp" label="垂点" active />
        <Tool icon="mid" label="中点" active />
        <Tool icon="vertex" label="顶点" />
        <Tool icon="coord" label="坐标" />
      </Group>
      <Group className="text-[#6a6a6a]">
        <Grip />
        <div className="text-black"><Combo label="偏移方式" value="不偏移" short /></div>
        <div className="-ml-1 flex items-center gap-0.5">
          <span className="h-4 w-px bg-[#b8b8b8]" />
          <label htmlFor="dx" className="text-[13px]">X=</label>
          <Spin id="dx" value="0" />
          <span className="text-xs">mm</span>
          <label htmlFor="dy" className="pl-0.5 text-[13px]">Y=</label>
          <Spin id="dy" value="0" />
          <span className="text-xs">mm</span>
          <span className="ml-0.5 h-4 w-px bg-[#b8b8b8]" />
        </div>
        <div className="-ml-[3px] flex items-center gap-2">
          <input id="rot" type="checkbox" className="h-[11px] w-[11px] appearance-none border border-[#9a9a9a] bg-white" />
          <label htmlFor="rot" className="text-black">旋转</label>
        </div>
        <div className="-ml-[3px] flex items-center gap-[3px]"><Spin id="angle" label="旋转角度" value="0.000" wide /><span>°</span></div>
      </Group>
    </div>
  );
}

function StatusBar() {
  const cell = "flex items-center whitespace-nowrap border border-[#dadada] bg-[#f7f7f7] pl-px ";
  return (
    <footer className="flex h-[22px] shrink-0 gap-0.5 pt-px">
      <div className={cell + "w-[148px]"}><Sim text="X=156589 Y=3062" /></div>
      <div className={cell + "w-[78px]"}><Sim text="层高:3.55m" /></div>
      <div className={cell + "w-[98px]"}><Sim text="底标高:-3.58m" /></div>
      <div className={cell + "w-12"}><Sim text="1(1)" /></div>
      <div className={cell + "grow"}><Sim text="按鼠标左键选择需要调整放坡的边，按右键确定或ESC取消" /></div>
      <div className={cell + "w-[71px]"}><Sim text="101.5 FPS" /></div>
    </footer>
  );
}

const APPS = [
  ["任务视图", "", <g key="a" stroke="#fff" fill="none" strokeWidth="1.300"><rect x="7" y="5" width="11" height="14" /><path d="M5 7H3v10h2M20 7h2v10h-2" /></g>],
  ["风车", "", <g key="a" fill="#e4e4e4"><path d="M12 11.500H6Q1 11 1 6t5-5q6 0 6 10.500zM12.500 12V6q0-5 5-5t5 5q0 6-10 6zM12 12.500h6q5 1 5 5t-5 5q-6 0-6-10zM11.500 12v6q-1 5-5.500 5t-5-5q0-6 10.500-6z" /></g>],
  ["提醒", "", <g key="a"><path d="M12 3a9.500 9.500 0 1 0 8 11M5 17q5 6 10 2t1-9-8-1-2 7 6 1 1-5-3 0" fill="none" stroke="#ccc" strokeWidth="1.500" /><path d="M20-4q5 1 5 7l2 4H13l2-4q0-6 5-7z" fill="#f2b21c" /></g>],
  ["Edge", "", <path key="a" d="M1 12C2 4 7 0 13 0q10 1 10 13H9q1 6 7 6 3 0 6-2v5q-4 2-9 2-9-2-8-11 1-5 6-6-7 0-10 5zM9 9h8q0-4-4-4-3 0-4 4z" fill="#0f7fdb" />],
  ["应用商店", "", <g key="a"><path d="M0 7h24v17H0z" fill="#fff" /><path d="M8 7V4q4-6 8 0v3" stroke="#fff" fill="none" strokeWidth="1.500" /><path d="M6.500 9.500h5v5h-5z" fill="#f25022" /><path d="M12.500 9.500h5v5h-5z" fill="#7fba00" /><path d="M6.500 15.500h5v5h-5z" fill="#00a4ef" /><path d="M12.500 15.500h5v5h-5z" fill="#ffb900" /></g>],
  ["文件资源管理器", "", <g key="a"><path d="M1 3h8l2 2h12v17H1z" fill="#f5c95a" /><path d="M1 7h22v15H1z" fill="#ffe393" /><path d="M5 22v-9h14v9h-4v-5H9v5z" fill="#2a9ae0" /></g>],
  ["Internet Explorer", "", <g key="a"><path d="M2 13C3 5 8 2 12.500 2q9 1 9.500 12H9q1 5 5 5t4-3h4q-2 7-10 7-9-1-10-10zM9 10h8q-1-4-4-4t-4 4z" fill="#2f9be8" /><path d="M2 22q-4-7 8-15T23 1q1 3-1 5" fill="none" stroke="#f5c33b" strokeWidth="2" /></g>],
  ["浏览器", "bar", <g key="a"><circle cx="12" cy="12" r="11.500" fill="#54b948" /><path d="M4 13q0-9 8-9 8 1 8 10H9q1 4 5 3l5-1q-2 5-7 5-8-1-8-8zm5-2h6q-3-5-6 0z" fill="#fff" /><path d="M1 17Q12 12 23 5" stroke="#8fdc4a" strokeWidth="2" fill="none" /></g>],
  ["便笺", "bar", <g key="a"><rect x="0" y="0" width="24" height="24" rx="2" fill="#f08c1c" /><path d="M3 4l14-1 2 17H5z" fill="#fff" /><path d="M6 7h9M6 10h9M7 13h7" stroke="#b88a50" /><path d="M10 17l9-13 3 2-9 12z" fill="#f6c84c" stroke="#7a4a18" /></g>],
  ["钢筋算量", "on", <g key="a"><rect x="0" y="0" width="24" height="24" rx="4" fill="#1287e0" /><path d="M12 20V8q0-4 4-3M5 12h14M5 12q0 6 6 6 7 0 8-5" fill="none" stroke="#fff" strokeWidth="2" /></g>],
  ["G", "bar", <path key="a" d="M20 0Q4 1 1 12q0 10 10 12 12 0 12-12l-10-2q0 4 3 5-4 5-8 0Q6 6 20 0z" fill="#1b94ea" />],
];

function Taskbar() {
  return (
    <div className="flex h-10 shrink-0 items-center bg-[#040b0f] text-white">
      <button aria-label="开始" className="flex h-full w-12 shrink-0 items-center justify-center bg-black">
        <svg viewBox="0 0 16 16" className="h-4 w-4" fill="#fff"><path d="M0 2.300L7 1.300v6.200H0zM8 1.100L16 0v7.500H8zM0 8.500h7v6.200l-7-1zM8 8.500h8V16l-8-1.100z" /></svg>
      </button>
      <div className="flex h-full w-[344px] shrink-0 items-center bg-[#333] pl-[9px] pr-3.5">
        <svg viewBox="0 0 22 22" className="h-[22px] w-[22px] shrink-0"><circle cx="11" cy="11" r="9" fill="none" stroke="#fff" strokeWidth="2.600" /></svg>
        <input aria-label="搜索" placeholder="在这里输入你要搜索的内容" className="ml-[5px] min-w-0 grow bg-transparent text-sm outline-none placeholder:text-[#9a9a9a]" />
        <svg viewBox="0 0 12 18" className="h-[18px] w-3" fill="none" stroke="#999"><rect x="3.500" y="1" width="5" height="10" /><path d="M1 8v5h10V8M6 13v3M3.500 16.500h5" /></svg>
      </div>
      <div className="flex h-full w-[546px] shrink-0">
        {APPS.map(([name, state, art]) => (
          <button key={name} aria-label={name} className={"relative flex flex-1 items-center justify-center " + (state === "on" ? "bg-[#33404a]" : "")}>
            <svg viewBox="0 0 24 24" className="h-[22px] w-[22px] overflow-visible" aria-hidden="true">{art}</svg>
            {state === "bar" && <span className="absolute bottom-0 left-1 right-1 h-0.5 bg-[#76b9ed]" />}
            {state === "on" && <span className="absolute bottom-0 left-0 right-0 h-0.5 bg-[#76b9ed]" />}
          </button>
        ))}
      </div>
      <div className="ml-auto flex h-full shrink-0 items-center text-center leading-[18px]">
        <div className="w-[60px]">51%<br />CPU使用</div>
        <svg viewBox="0 0 12 8" className="ml-3.5 h-2 w-3" fill="none" stroke="#fff" strokeWidth="1.300"><path d="M1 7l5-5 5 5" /></svg>
        <svg viewBox="0 0 16 14" className="ml-2.5 h-3.5 w-4" fill="none" stroke="#fff"><path d="M5.500 4.500h9v7h-9zM1 3h4v3q-2 3-2 0H1zM2 0v3M4 0v3M3 7v4h2" /><path d="M7 6h6v4H7z" fill="#fff" /></svg>
        <svg viewBox="0 0 14 14" className="ml-2.5 h-3.5 w-3.5" fill="none" stroke="#ddd" strokeWidth="1.200"><path d="M1 13A12 12 0 0 1 13 1M4 13a9 9 0 0 1 9-9M7 13a6 6 0 0 1 6-6M10 13a3 3 0 0 1 3-3" /></svg>
        <svg viewBox="0 0 16 14" className="ml-[7px] h-3.5 w-4" fill="none" stroke="#fff"><path d="M1 5h3l4-4v12L4 9H1zM10 5q1 2 0 4M12 3q3 4 0 8M14 1q4 6 0 12" /></svg>
        <svg viewBox="0 0 23 14" className="ml-2 h-3.5 w-[23px]" fill="none" stroke="#fff"><rect x=".5" y=".5" width="22" height="13" /><path d="M3 4h17M3 7h17" strokeDasharray="2 1" /><path d="M3 10.500h3M7 10.500h9M17 10.500h3" /></svg>
        <span className="ml-2.5 text-sm">中</span>
        <svg viewBox="0 0 16 16" className="ml-3.5 h-4 w-4"><path d="M1 2l13-2 2 13-13 3z" fill="#ee4a1c" /><path d="M12 4Q6 3 6 5.500t4 2.500-1 4q-3 0-4-.5" fill="none" stroke="#fff" strokeWidth="2" /></svg>
        <div className="ml-3.5 w-[68px]">14:37<br />2017/11/4</div>
        <button aria-label="通知" className="ml-3.5 mr-3 flex">
          <svg viewBox="0 0 24 26" className="h-[26px] w-6" fill="none"><path d="M1 3h16v12H7l-3 4v-4H1z" fill="#fff" /><path d="M4 6h10M4 9h10M4 12h6" stroke="#222" /><circle cx="16" cy="17" r="7.500" fill="#444" stroke="#888" /><text x="16" y="21.500" fill="#fff" textAnchor="middle" className="text-xs">2</text></svg>
        </button>
        <span className="mr-1 h-full w-px bg-[#555]" />
      </div>
    </div>
  );
}

function InputMethodBar() {
  return (
    <div className="absolute right-[210px] top-0 flex h-[27px] w-[185px] items-center">
      <div className="absolute inset-x-0 bottom-px left-3 top-[3px] border border-[#b8cce4] bg-white" />
      <svg viewBox="0 0 27 27" className="relative h-[27px] w-[27px]"><path d="M1 4L22 0l5 21-22 6z" fill="#ee4a1c" /><path d="M21 6q-11-2-12 2t7 4 0 8q-5 1-9-1" fill="none" stroke="#fff" strokeWidth="3.500" /></svg>
      <div className="relative flex grow items-center justify-between pl-1.5 pr-1 text-[#1f6fc8]">
        <span className="text-sm font-bold leading-none">中</span>
        <svg viewBox="0 0 12 14" className="h-3.5 w-3" fill="none"><circle cx="2.500" cy="4" r="1.700" stroke="currentColor" strokeWidth="1.200" /><path d="M9.500 6v3l-1.500 3" stroke="currentColor" strokeWidth="2.400" /></svg>
        <svg viewBox="0 0 12 16" className="h-4 w-3" fill="currentColor"><rect x="3.500" y="0" width="5" height="9" rx="2.500" /><path d="M1 6v2q1 4 5 4t5-4V6M6 12v3M3 15h6" fill="none" stroke="currentColor" strokeWidth="1.500" /></svg>
        <svg viewBox="0 0 17 12" className="h-3 w-[17px]" fill="none" stroke="currentColor"><rect x="1" y="1" width="15" height="10" strokeWidth="1.500" /><path d="M3 4h11M3 6.500h11" strokeDasharray="1.500 1" strokeWidth="1.300" /><path d="M5 9h7" /></svg>
        <svg viewBox="0 0 16 16" className="h-4 w-4" fill="#b4c4d8"><circle cx="6" cy="4" r="3.500" /><path d="M0 14q0-6 6-6h10v8H6v-2z" /><text x="6" y="15" fill="#fff" className="text-[8px]">19</text></svg>
        <svg viewBox="0 0 16 14" className="h-3.5 w-4" fill="currentColor"><path d="M5 0q3 2 6 0l5 3-2 4-2-1v8H4V6L2 7 0 3z" /></svg>
        <svg viewBox="0 0 16 16" className="h-4 w-4"><path d="M1 15l-1-2 8-7q-1-5 4-6l-1 4 2 1 3-2q0 5-6 6l-7 7z" fill="currentColor" /></svg>
      </div>
    </div>
  );
}

function Annotations() {
  return (
    <svg viewBox="0 0 1366 768" preserveAspectRatio="none" className="pointer-events-none absolute inset-0 h-full w-full" fill="none" stroke="#ff0000" strokeWidth="3">
      <ellipse cx="521.500" cy="425" rx="91" ry="68" />
      <ellipse cx="950" cy="315" rx="86.500" ry="47" />
      <ellipse cx="1166" cy="161" rx="153" ry="43" />
    </svg>
  );
}

export default function App() {
  return (
    <div className="relative flex h-screen min-h-[600px] flex-col overflow-hidden bg-[#f0f0f0] font-['Noto_Sans','Noto_Sans_CJK_SC',sans-serif] text-xs text-black">
      <TitleBar />
      <MenuBar />
      <MainToolbar />
      <div className="flex min-h-0 grow">
        <NavPanel />
        <main className="ml-[5px] flex min-w-0 grow flex-col">
          <DrawToolbars />
          <div className="relative min-h-0 grow overflow-hidden bg-black">
            <Drawing />
            <SlopeDialog />
          </div>
          <SnapToolbar />
        </main>
      </div>
      <StatusBar />
      <Taskbar />
      <InputMethodBar />
      <div className="absolute -top-[26px] right-36 flex h-[46px] w-[46px] items-end justify-center rounded-full border-2 border-[#d8d8d8] bg-[#34b24a] pb-1 font-bold leading-none text-white shadow-md">70</div>
      <Annotations />
    </div>
  );
}
